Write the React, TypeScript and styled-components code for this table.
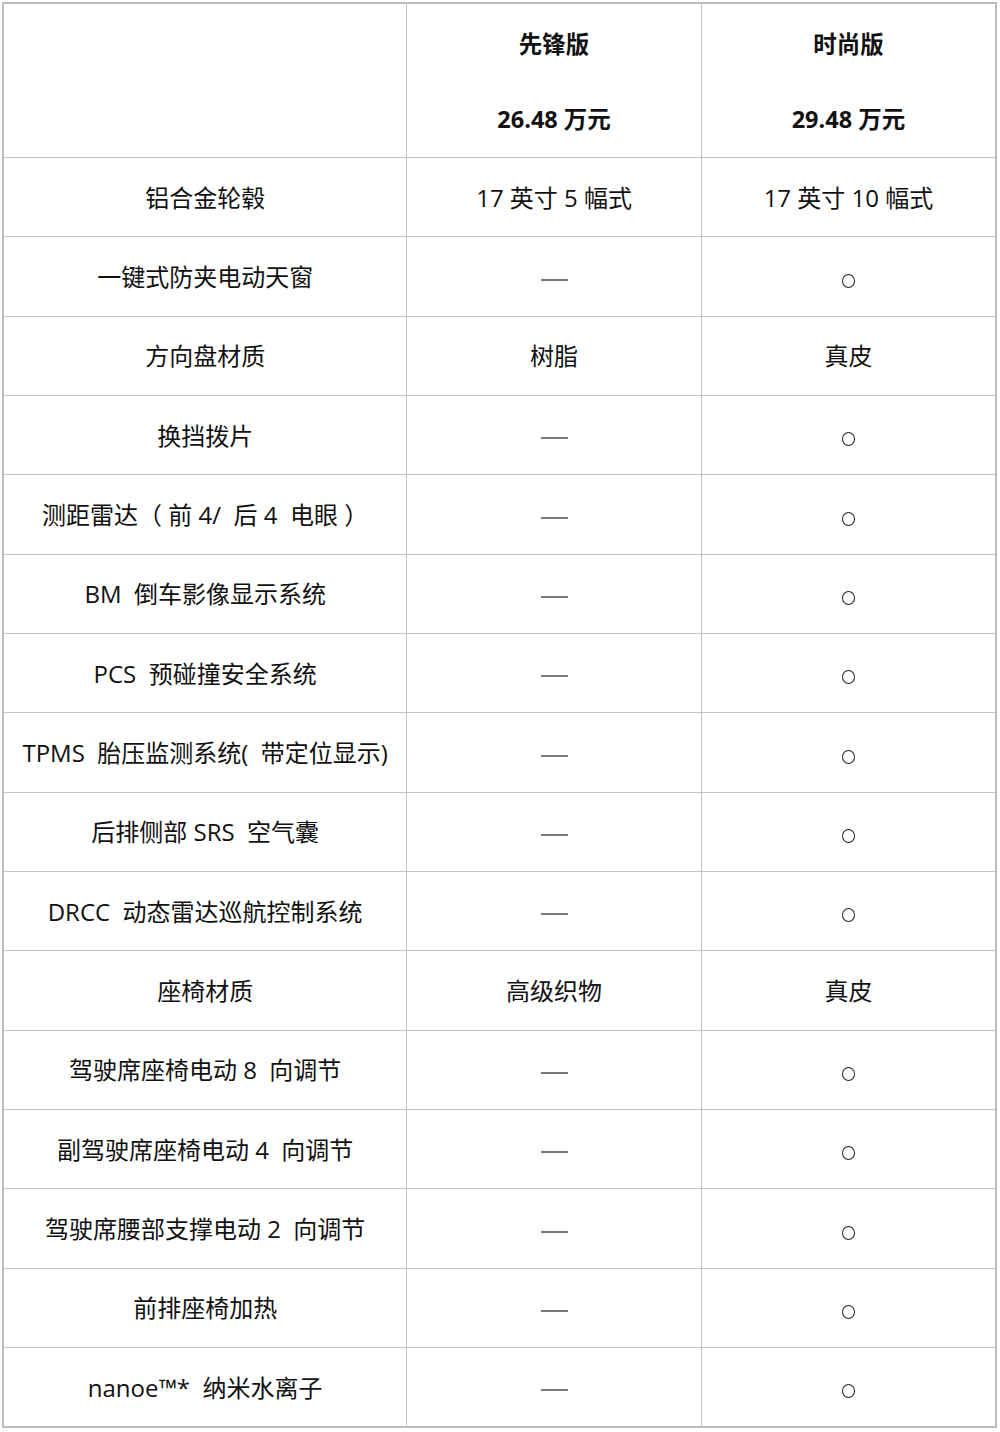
import React from "react";
import styled, { createGlobalStyle } from "styled-components";

const Global = createGlobalStyle`
  html, body { margin: 0; padding: 0; background: #fff; }
  body { font-family: "Open Sans", "Noto Sans CJK SC", sans-serif; color: #111; }
`;

const Page = styled.div`
  padding: 2px 3px 0 2px;
`;

const Table = styled.table`
  width: 995px;
  border-collapse: collapse;
  table-layout: fixed;
  border: 2px solid #bdbdbd;
`;

const Cell = styled.td`
  border: 1px solid #c4c4c4;
  height: 79.35px;
  padding: 1px 0 0 0;
  text-align: center;
  vertical-align: middle;
  font-size: 24px;
  line-height: 1;
  white-space: nowrap;
  box-sizing: border-box;
`;

const HeadCell = styled.th`
  border: 1px solid #c4c4c4;
  height: 153px;
  padding: 0;
  text-align: center;
  vertical-align: top;
  font-size: 23.5px;
  font-weight: 700;
  line-height: 1;
`;

const HeadLine = styled.div<{ $top: number }>`
  margin-top: ${(p) => p.$top}px;
`;

const Dash = styled.span`
  display: inline-block;
  width: 27px;
  height: 2px;
  background: #7a7a7a;
  vertical-align: middle;
`;

const Circle = styled.span`
  display: inline-block;
  width: 11px;
  height: 12px;
  border: 1.7px solid #222;
  border-radius: 50%;
  vertical-align: middle;
  margin-top: 2px;
`;

type V = string | "-" | "o";
const rows: [string, V, V][] = [
  ["铝合金轮毂", "17 英寸 5 幅式", "17 英寸 10 幅式"],
  ["一键式防夹电动天窗", "-", "o"],
  ["方向盘材质", "树脂", "真皮"],
  ["换挡拨片", "-", "o"],
  ["测距雷达（ 前 4/  后 4  电眼 ）", "-", "o"],
  ["BM  倒车影像显示系统", "-", "o"],
  ["PCS  预碰撞安全系统", "-", "o"],
  ["TPMS  胎压监测系统(  带定位显示)", "-", "o"],
  ["后排侧部 SRS  空气囊", "-", "o"],
  ["DRCC  动态雷达巡航控制系统", "-", "o"],
  ["座椅材质", "高级织物", "真皮"],
  ["驾驶席座椅电动 8  向调节", "-", "o"],
  ["副驾驶席座椅电动 4  向调节", "-", "o"],
  ["驾驶席腰部支撑电动 2  向调节", "-", "o"],
  ["前排座椅加热", "-", "o"],
  ["nanoe™*  纳米水离子", "-", "o"],
];

const Text = styled.span`
  white-space: pre;
`;

const renderVal = (v: V) => {
  if (v === "-") return <Dash />;
  if (v === "o") return <Circle />;
  return <Text>{v}</Text>;
};

export default function App() {
  return (
    <>
      <Global />
      <Page>
        <Table>
          <colgroup>
            <col style={{ width: 403 }} />
            <col style={{ width: 294 }} />
            <col style={{ width: 294 }} />
          </colgroup>
          <thead>
            <tr>
              <HeadCell />
              <HeadCell>
                <HeadLine $top={29}>先锋版</HeadLine>
                <HeadLine $top={51}>26.48 万元</HeadLine>
              </HeadCell>
              <HeadCell>
                <HeadLine $top={29}>时尚版</HeadLine>
                <HeadLine $top={51}>29.48 万元</HeadLine>
              </HeadCell>
            </tr>
          </thead>
          <tbody>
            {rows.map((r, i) => (
              <tr key={i}>
                <Cell>{renderVal(r[0])}</Cell>
                <Cell>{renderVal(r[1])}</Cell>
                <Cell>{renderVal(r[2])}</Cell>
              </tr>
            ))}
          </tbody>
        </Table>
      </Page>
    </>
  );
}
